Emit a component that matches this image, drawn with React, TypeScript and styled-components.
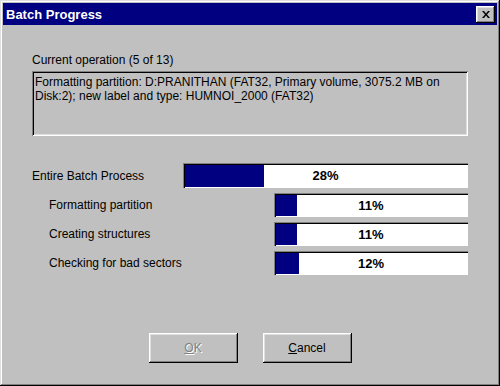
import styled, { createGlobalStyle } from 'styled-components';

const GlobalStyle = createGlobalStyle`
  html, body {
    margin: 0;
    padding: 0;
    background: #c0c0c0;
  }
  * {
    box-sizing: border-box;
  }
`;

const subTasks = [
  { label: 'Formatting partition', percent: 11 },
  { label: 'Creating structures', percent: 11 },
  { label: 'Checking for bad sectors', percent: 12 },
];

function ProgressBar({ percent, width, height }: { percent: number; width: number; height: number }) {
  return (
    <Bar $width={width} $height={height}>
      <Fill style={{ width: `${percent}%` }} />
      <Percent>{percent}%</Percent>
    </Bar>
  );
}

export default function App() {
  return (
    <>
      <GlobalStyle />
      <Window>
        <TitleBar>
          <Title>Batch Progress</Title>
          <CloseBtn aria-label="Close">
            <svg width="8" height="7" viewBox="0 0 8 7">
              <path d="M0 0h2l2 2.5L6 0h2L5 3.5 8 7H6L4 4.5 2 7H0l3-3.5z" fill="#000" />
            </svg>
          </CloseBtn>
        </TitleBar>
        <Body>
          <Label>Current operation (5 of 13)</Label>
          <InfoBox>
            Formatting partition: D:PRANITHAN (FAT32, Primary volume, 3075.2 MB on Disk:2); new label and
            type: HUMNOI_2000 (FAT32)
          </InfoBox>
          <Progress>
            <Row>
              <Label>Entire Batch Process</Label>
              <ProgressBar percent={28} width={285} height={25} />
            </Row>
            {subTasks.map(({ label, percent }) => (
              <Row key={label}>
                <SubLabel>{label}</SubLabel>
                <ProgressBar percent={percent} width={194} height={24} />
              </Row>
            ))}
          </Progress>
          <ButtonRow>
            <Button disabled>
              <u>O</u>K
            </Button>
            <Button>
              <u>C</u>ancel
            </Button>
          </ButtonRow>
        </Body>
      </Window>
    </>
  );
}

const Window = styled.div`
  width: 500px;
  height: 386px;
  padding: 3px;
  display: flex;
  flex-direction: column;
  background: #c0c0c0;
  box-shadow: inset -1px -1px #000, inset 1px 1px #dfdfdf, inset -2px -2px #808080,
    inset 2px 2px #fff;
  font-family: 'Liberation Sans', Arial, sans-serif;
  font-size: 12px;
  color: #000;
`;

const TitleBar = styled.div`
  height: 22px;
  display: flex;
  align-items: center;
  justify-content: space-between;
  padding: 0 2px 0 3px;
  background: #000080;
`;

const Title = styled.span`
  color: #fff;
  font-weight: 700;
  font-size: 13px;
`;

const CloseBtn = styled.button`
  width: 19px;
  height: 17px;
  padding: 0;
  border: none;
  display: flex;
  align-items: center;
  justify-content: center;
  background: #c0c0c0;
  box-shadow: inset -1px -1px #000, inset 1px 1px #fff, inset -2px -2px #808080,
    inset 2px 2px #dfdfdf;
`;

const Body = styled.div`
  flex: 1;
  display: flex;
  flex-direction: column;
  padding: 28px 29px 20px;
`;

const Label = styled.div`
  line-height: 14px;
  white-space: nowrap;
`;

const SubLabel = styled(Label)`
  padding-left: 17px;
`;

const InfoBox = styled.div`
  margin-top: 4px;
  height: 65px;
  padding: 4px 3px;
  line-height: 14px;
  box-shadow: inset 1px 1px #808080, inset -1px -1px #fff, inset 2px 2px #000,
    inset -2px -2px #dfdfdf;
`;

const Progress = styled.div`
  margin-top: 27px;
  display: flex;
  flex-direction: column;
  gap: 5px;
`;

const Row = styled.div`
  display: flex;
  align-items: center;
  justify-content: space-between;
`;

const Bar = styled.div<{ $width: number; $height: number }>`
  position: relative;
  width: ${(p) => p.$width}px;
  height: ${(p) => p.$height}px;
  padding: 2px 1px 1px 2px;
  display: flex;
  background: #fff;
  box-shadow: inset 1px 1px #808080, inset 2px 2px #000, inset -1px -1px #fff;
`;

const Fill = styled.div`
  height: 100%;
  background: #000080;
`;

const Percent = styled.span`
  position: absolute;
  inset: 0;
  display: flex;
  align-items: center;
  justify-content: center;
  font-weight: 700;
  font-size: 13px;
`;

const ButtonRow = styled.div`
  margin-top: auto;
  display: flex;
  justify-content: center;
  gap: 25px;
`;

const Button = styled.button`
  width: 89px;
  height: 30px;
  border: none;
  padding: 0;
  background: #c0c0c0;
  font-family: inherit;
  font-size: 12px;
  color: #000;
  box-shadow: inset -1px -1px #000, inset 1px 1px #fff, inset -2px -2px #808080,
    inset 2px 2px #dfdfdf;

  &:disabled {
    color: #808080;
    text-shadow: 1px 1px #fff;
  }
`;
